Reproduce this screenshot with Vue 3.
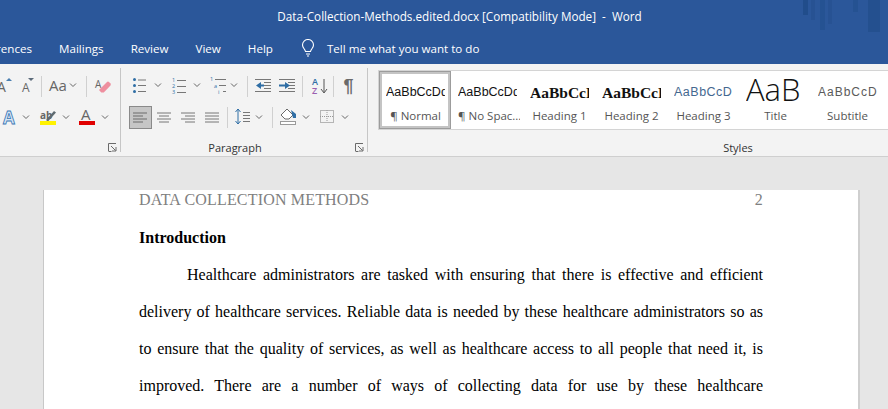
<script setup>
const styles = [
  { cls: 'normal', sample: 'AaBbCcDdEe', label: '¶ Normal' },
  { cls: 'plain', sample: 'AaBbCcDdEe', label: '¶ No Spac...' },
  { cls: 'h1', sample: 'AaBbCcDd', label: 'Heading 1' },
  { cls: 'h1', sample: 'AaBbCcDd', label: 'Heading 2' },
  { cls: 'h3', sample: 'AaBbCcD', label: 'Heading 3' },
  { cls: 'title', sample: 'AaBbC', label: 'Title' },
  { cls: 'sub', sample: 'AaBbCcDd', label: 'Subtitle' }
]
const tabs = ['References', 'Mailings', 'Review', 'View', 'Help']
const chevPath = (x, y) => `M${x - 3} ${y - 1.5}l3 3 3-3`
const g1Chev = [[73, 85], [26, 117], [66, 117], [105, 117]].map(([x, y]) => chevPath(x, y)).join('')
const g2Chev = [[37, 85], [76, 85], [113, 85], [138, 117], [185, 117], [224, 117]].map(([x, y]) => chevPath(x, y)).join('')
</script>

<template>
  <div class="app">
    <header class="titlebar">
      <svg class="deco" width="88" height="34" viewBox="0 0 88 34" aria-hidden="true">
        <g fill="#1f4a86">
          <rect x="3" width="5" height="15" opacity=".75" />
          <rect x="11" width="4" height="20" opacity=".35" />
          <rect x="20" width="5" height="30" opacity=".4" />
          <rect x="28" width="4" height="24" opacity=".3" />
          <rect x="53" width="5" height="12" opacity=".4" />
          <rect x="68" width="12" height="32" opacity=".55" />
        </g>
      </svg>
      <span>Data-Collection-Methods.edited.docx [Compatibility Mode]&nbsp; -&nbsp; Word</span>
    </header>
    <nav class="tabs">
      <span v-for="t in tabs" :key="t" class="tab">{{ t }}</span>
      <svg class="bulb" width="14" height="18" viewBox="0 0 14 18" aria-hidden="true">
        <path d="M4.500 12.500C4 10 1.500 9 1.500 6a5.500 5.500 0 0 1 11 0c0 3-2.500 4-3 6.500zM5 15h4M6 17h2" fill="none" stroke="#fff" stroke-width="1.100" />
      </svg>
      <span class="tell">Tell me what you want to do</span>
    </nav>

    <section class="ribbon">
      <div class="group g1">
        <svg width="120" height="70" viewBox="0 68 120 70" aria-hidden="true">
          <text x="-3" y="92" class="ico" font-size="14">A</text>
          <path d="M6 81l3-3 3 3z" fill="#4a7fb0" />
          <text x="22" y="92" class="ico" font-size="12">A</text>
          <path d="M28 78l3 3 3-3z" fill="#5c6b7a" />
          <path d="M41.500 76v21M86.500 76v21" stroke="#d0d0d0" />
          <text x="49" y="91" class="ico" font-size="15">Aa</text>
          <text x="95" y="88" class="ico" font-size="10">A</text>
          <path d="M99 90l8-8q1-1 2.500 .5l.8 .8q1 1 0 2.500l-6.500 6.700h-2.500z" fill="#ee8f9f" />
          <text x="3" y="124" class="effect" font-size="17">A</text>
          <text x="40" y="119" class="ico bold" font-size="10">ab</text>
          <path d="M46 120l8-9 2 1.500-8 9z" fill="#5e6a70" />
          <rect x="40" y="121" width="16" height="4" fill="#fff200" />
          <text x="81" y="120" class="ico" font-size="15">A</text>
          <rect x="79" y="121" width="16" height="4" fill="#e00000" />
          <path :d="g1Chev" fill="none" stroke="#666" />
        </svg>
        <footer class="gfoot">
          <svg class="launch" width="9" height="9" viewBox="0 0 9 9" aria-hidden="true"><path d="M.5 8V.5H8M3 3l4.500 4.500M4 8h4V4M.5 8.500h3" fill="none" stroke="#6a6a6a" /></svg>
        </footer>
      </div>

      <div class="group g2">
        <svg width="246" height="70" viewBox="121 68 246 70" aria-hidden="true">
          <g transform="translate(121)">
            <circle cx="13.500" cy="79.500" r="1.500" fill="#2f6ea5" />
            <circle cx="13.500" cy="85.500" r="1.500" fill="#2f6ea5" />
            <circle cx="13.500" cy="91.500" r="1.500" fill="#2f6ea5" />
            <path d="M17 80h8M17 85.500h8M17 91.500h8" stroke="#777" fill="none" />
            <text x="51" y="82" class="num" font-size="5.500">1</text>
            <text x="51" y="88" class="num" font-size="5.500">2</text>
            <text x="51" y="94" class="num" font-size="5.500">3</text>
            <path d="M56 80.500h9M56 86.500h9M56 92.500h9" stroke="#777" fill="none" />
            <text x="89" y="81" class="num" font-size="5.500">1</text>
            <text x="93" y="88" class="num" font-size="5.500">a</text>
            <text x="97" y="94" class="num" font-size="5.500">i</text>
            <path d="M94 79.500h11M98 85.500h7M102 91.500h3" stroke="#777" fill="none" />
            <path d="M126.500 76v21M181.500 76v21M212.500 76v21M106.500 107v21M151.500 107v21" stroke="#d0d0d0" />
            <path d="M134 79.500h16M143 82.500h7M143 85.500h7M143 88.500h7M134 91.500h16M158 79.500h16M167 82.500h7M167 85.500h7M167 88.500h7M158 91.500h16" stroke="#777" fill="none" />
            <path d="M140 82l-5 3.500 5 3.500zM164 82l5 3.500-5 3.500z" fill="#2f6ea5" />
            <path d="M140 84.500h3v2h-3zM158 84.500h6v2h-6z" fill="#2f6ea5" />
            <text x="191" y="85" class="sort-a" font-size="9">A</text>
            <text x="191" y="94" class="sort-z" font-size="9">Z</text>
            <path d="M203 79v13M200 89l3 4 3-4" stroke="#555" fill="none" />
            <text x="222.500" y="92" class="pil" font-size="18">¶</text>
            <rect x="8.500" y="106.500" width="22" height="22" fill="#c6c6c6" stroke="#8a8a8a" />
            <path d="M12 113h14M12 116h10M12 119h14M12 122h10" stroke="#6a6a6a" fill="none" />
            <path d="M36 113h14M38 116h10M36 119h14M38 122h10M60 113h14M64 116h10M60 119h14M64 122h10M84 113h14M84 116h14M84 119h14M84 122h14" stroke="#777" fill="none" />
            <path d="M117 109v15M114.500 112l2.500-3 2.500 3M114.500 121l2.500 3 2.500-3" stroke="#2f6ea5" fill="none" />
            <path d="M122 112.500h7M122 115.500h7M122 118.500h7M122 121.500h7" stroke="#777" fill="none" />
            <path d="M160 115l6-6 6 6-4 4h-4z" fill="#fff" stroke="#6a6a6a" />
            <path d="M170 110l5 4v4h-3z" fill="#2f6ea5" />
            <rect x="159.500" y="121.500" width="15" height="3" fill="#fff" stroke="#9a9a9a" />
            <rect x="199.500" y="110.500" width="13" height="12" fill="none" stroke="#777" stroke-dasharray="1 1" />
            <path d="M206 110v12M199 116.500h13" stroke="#999" stroke-dasharray="1 1" />
            <path :d="g2Chev" fill="none" stroke="#666" />
          </g>
        </svg>
        <footer class="gfoot para">
          <span class="glabel">Paragraph</span>
          <svg class="launch" width="9" height="9" viewBox="0 0 9 9" aria-hidden="true"><path d="M.5 8V.5H8M3 3l4.500 4.500M4 8h4V4M.5 8.500h3" fill="none" stroke="#6a6a6a" /></svg>
        </footer>
      </div>

      <div class="group styles">
        <div class="gallery">
          <div v-for="(s, i) in styles" :key="s.label" class="style" :class="{ selected: i === 0 }">
            <div class="sample" :class="s.cls">{{ s.sample }}</div>
            <div class="slabel">{{ s.label }}</div>
          </div>
        </div>
        <footer class="gfoot">
          <span class="glabel">Styles</span>
        </footer>
      </div>
    </section>

    <main class="canvas">
      <article class="page">
        <div class="running"><span>DATA COLLECTION METHODS</span><span>2</span></div>
        <h1>Introduction</h1>
        <p>Healthcare administrators are tasked with ensuring that there is effective and efficient delivery of healthcare services. Reliable data is needed by these healthcare administrators so as to ensure that the quality of services, as well as healthcare access to all people that need it, is improved. There are a number of ways of collecting data for use by these healthcare administrators.</p>
      </article>
    </main>
  </div>
</template>

<style scoped>
.app { width: 888px; height: 409px; overflow: hidden; background: #e6e6e6; font-family: "Open Sans", "Noto Sans", sans-serif; position: relative; }
.titlebar { height: 32px; background: #2b579a; color: #fff; font-size: 11.700px; display: flex; align-items: center; justify-content: center; padding-left: 31px; box-sizing: border-box; position: relative; white-space: nowrap; }
.deco { position: absolute; left: 800px; top: 0; }
.tabs { height: 32px; background: #2b579a; color: #fff; font-size: 11.600px; display: flex; align-items: center; margin-left: -28px; white-space: nowrap; }
.tab { margin-right: 27px; }
.bulb { margin-left: 1px; }
.tell { margin-left: 12px; }
.ribbon { height: 93px; box-sizing: border-box; background: #f3f3f3; border-bottom: 1px solid #cfcfcf; display: flex; padding: 4px 0 4px; overflow: hidden; }
.group { flex: none; display: flex; flex-direction: column; }
.g1 { width: 120px; border-right: 1px solid #c6c6c6; }
.g2 { width: 246px; border-right: 1px solid #c6c6c6; }
.styles { width: 740px; }
.gfoot { flex: 1; display: flex; align-items: flex-end; justify-content: center; position: relative; }
.para { padding-right: 18px; }
.glabel { font-size: 11px; line-height: 14px; color: #333; margin-bottom: -3px; }
.launch { position: absolute; right: 3px; bottom: 0; }
.ico { font-family: "Open Sans", sans-serif; fill: #666; }
.bold { font-weight: 700; }
.effect { font-family: "Open Sans", sans-serif; font-weight: 700; fill: #d7e6f5; stroke: #3b78b5; stroke-width: .8; }
.num { font-family: "Open Sans", sans-serif; fill: #2f6ea5; }
.sort-a { font-family: "Open Sans", sans-serif; fill: #2f6ea5; font-weight: 600; }
.sort-z { font-family: "Open Sans", sans-serif; fill: #9a5fb0; font-weight: 600; }
.pil { font-family: "Liberation Sans", sans-serif; fill: #6a6a6a; font-weight: 700; }
.gallery { margin: 2px 0 0 10px; height: 60px; box-sizing: border-box; background: #fff; border: 1px solid #d4d4d4; border-right: none; display: flex; }
.style { width: 72px; flex: none; box-sizing: border-box; height: 58px; overflow: hidden; padding: 0 3px 0 4px; border: 3px solid transparent; }
.selected { border: 3px solid #c4c4c4; outline: 1px solid #9c9c9c; outline-offset: -1px; }
.sample { height: 34px; line-height: 37px; white-space: nowrap; overflow: hidden; font-family: "Liberation Sans", sans-serif; font-size: 12.500px; color: #111; }
.h1 { font-family: "Liberation Serif", serif; font-weight: 700; font-size: 15.500px; }
.h3 { color: #44688f; letter-spacing: .5px; }
.title { font-family: "Open Sans", sans-serif; font-weight: 300; font-size: 31px; line-height: 30px; width: 56px; }
.sub { color: #5a5a5a; letter-spacing: 1px; font-size: 12px; }
.slabel { font-size: 11.500px; line-height: 16px; color: #555; text-align: center; white-space: nowrap; }
.canvas { padding: 33px 30px 0 44px; }
.page { width: 814px; min-height: 300px; box-sizing: border-box; background: #fff; box-shadow: -1px 0 0 #c8c8c8, 2px 0 0 #cfcfcf; padding: 0 95px; font-family: "Liberation Serif", serif; font-size: 16px; color: #000; }
.running { display: flex; justify-content: space-between; color: #808080; height: 29px; line-height: 20px; font-size: 16px; letter-spacing: .18px; }
h1 { margin: 0; font-size: 16px; font-weight: 700; line-height: 37px; }
p { margin: 0; line-height: 37px; text-align: justify; text-indent: 48px; }
</style>
